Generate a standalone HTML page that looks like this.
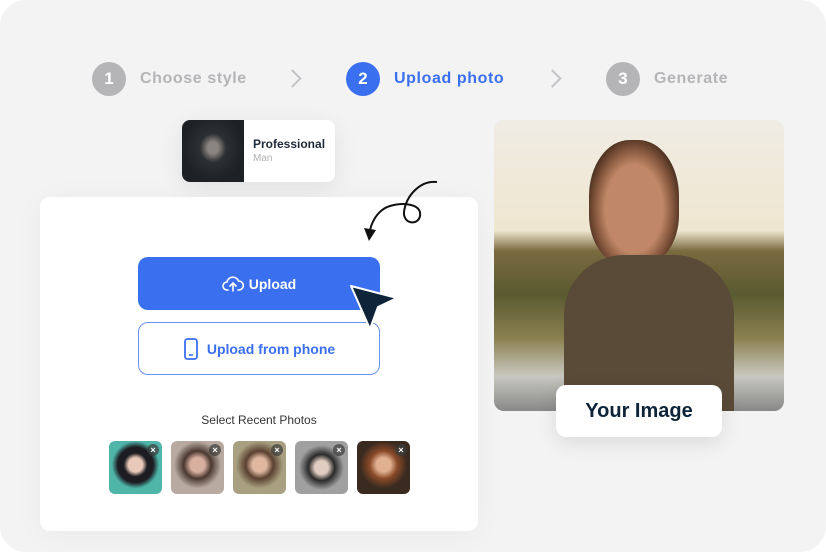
<!DOCTYPE html>
<html><head><style>
*{margin:0;padding:0;box-sizing:border-box}
body{width:826px;height:552px;background:#fff;font-family:"Liberation Sans",sans-serif;overflow:hidden;position:relative}
.bg{position:absolute;left:0;top:0;width:826px;height:552px;background:#f3f3f4;border-radius:26px}
.step{position:absolute;top:62px;height:34px;display:flex;align-items:center;font-weight:bold;font-size:16px;letter-spacing:0.6px}
.circ{width:34px;height:34px;border-radius:50%;color:#fff;display:flex;align-items:center;justify-content:center;font-size:17px;margin-right:14px;letter-spacing:0}
.chev{position:absolute;top:72px;width:13px;height:13px;border-right:2px solid #c4c4c8;border-top:2px solid #c4c4c8;transform:rotate(45deg)}
.card{position:absolute;left:40px;top:197px;width:438px;height:334px;background:#fff;border-radius:10px;box-shadow:0 4px 30px rgba(0,0,0,.04)}
.btn{position:absolute;left:138px;width:242px;height:53px;border-radius:10px;display:flex;align-items:center;justify-content:center;font-weight:bold;font-size:14px}
.th{position:absolute;top:441px;width:53px;height:53px;border-radius:6px}
.th i{position:absolute;right:3px;top:3px;width:12px;height:12px;border-radius:50%;background:rgba(60,60,60,.7);color:#fff;font-size:9px;line-height:12px;text-align:center;font-style:normal;font-weight:bold}
</style></head><body>
<div class="bg"></div>
<div class="step" style="left:92px;color:#b5b5b8"><div class="circ" style="background:#b5b5b8">1</div>Choose style</div>
<div class="chev" style="left:286px"></div>
<div class="step" style="left:346px;color:#3a6ff0"><div class="circ" style="background:#3a6ff0">2</div>Upload photo</div>
<div class="chev" style="left:546px"></div>
<div class="step" style="left:606px;color:#b5b5b8"><div class="circ" style="background:#b5b5b8">3</div>Generate</div>

<div style="position:absolute;left:182px;top:120px;width:153px;height:62px;background:#fff;border-radius:8px;box-shadow:0 6px 24px rgba(0,0,0,.08);overflow:hidden">
<div style="position:absolute;left:0;top:0;width:62px;height:62px;background:radial-gradient(ellipse at 50% 45%,#8a8580 0 12%,#2c2f33 30%,#1d2124 70%)"></div>
<div style="position:absolute;left:71px;top:17px;font-size:12px;font-weight:bold;color:#1d2b3a">Professional</div>
<div style="position:absolute;left:71px;top:33px;font-size:10px;color:#b0b0b0">Man</div>
</div>

<div class="card"></div>
<svg style="position:absolute;left:360px;top:178px" width="82" height="65" viewBox="0 0 82 65"><path d="M77 4C60 2 46 18 44 34C43 46 58 48 60 38C62 26 44 24 30 28C20 31 13 40 10 52" fill="none" stroke="#111" stroke-width="2"/><path d="M4 50L16 52L9 63Z" fill="#111"/></svg>
<div class="btn" style="top:257px;background:#3a6ff0;color:#fff"><svg width="22" height="18" viewBox="0 0 22 18" style="margin-right:5px"><path d="M6 15H5a4 4 0 0 1 0-8 6 6 0 0 1 11.5-1A4.5 4.5 0 0 1 17 15h-1M11 16V8M8 11l3-3 3 3" fill="none" stroke="#fff" stroke-width="1.6" stroke-linecap="round"/></svg>Upload</div>
<div class="btn" style="top:322px;background:#fff;border:1px solid #6b93f2;color:#3a6ff0"><svg width="16" height="22" viewBox="0 0 16 22" style="margin-right:8px"><rect x="2" y="1" width="12" height="20" rx="2.5" fill="none" stroke="#3a6ff0" stroke-width="1.8"/><path d="M6 17h4" stroke="#3a6ff0" stroke-width="1.6"/></svg>Upload from phone</div>
<svg style="position:absolute;left:348px;top:283px" width="52" height="50" viewBox="0 0 52 50"><path d="M3 3L49 15L30 24L22 46Z" fill="#0e2439" stroke="#fff" stroke-width="2" stroke-linejoin="round"/></svg>
<div style="position:absolute;left:0;width:518px;top:413px;text-align:center;font-size:12px;color:#333">Select Recent Photos</div>
<div class="th" style="left:109px;background:radial-gradient(circle at 50% 45%,#e8c8b8 0 18%,#1c1c22 30%,#1c1c22 45%,#4fb5a8 60%)"><i>×</i></div>
<div class="th" style="left:171px;background:radial-gradient(circle at 50% 45%,#d8b0a0 0 18%,#4a3830 35%,#b8aaa0 60%)"><i>×</i></div>
<div class="th" style="left:233px;background:radial-gradient(circle at 50% 45%,#e0b8a0 0 18%,#5a4030 35%,#a8a080 60%)"><i>×</i></div>
<div class="th" style="left:295px;background:radial-gradient(circle at 50% 50%,#e0ccc0 0 18%,#2a2a2a 35%,#a0a0a0 60%)"><i>×</i></div>
<div class="th" style="left:357px;background:radial-gradient(circle at 50% 45%,#e0b090 0 18%,#8a4a28 35%,#3a2a20 60%)"><i>×</i></div>

<div style="position:absolute;left:494px;top:120px;width:290px;height:291px;border-radius:10px;overflow:hidden;background:linear-gradient(180deg,#f0ece4 0%,#efe6d0 38%,#7a6a40 45%,#5a5a30 60%,#8a8050 75%,#c8c8c0 88%,#888 100%)">
<div style="position:absolute;left:95px;top:20px;width:90px;height:125px;border-radius:45% 45% 40% 40%;background:radial-gradient(ellipse at 50% 55%,#c08868 0 45%,#8a5a40 60%,#4a3020 75%)"></div>
<div style="position:absolute;left:70px;top:135px;width:170px;height:160px;border-radius:60px 60px 0 0;background:#5a4a38"></div>
</div>
<div style="position:absolute;left:556px;top:385px;width:166px;height:52px;background:#fff;border-radius:10px;box-shadow:0 6px 20px rgba(0,0,0,.1);display:flex;align-items:center;justify-content:center;font-weight:bold;font-size:20px;color:#0e2439">Your Image</div>
</body></html>
